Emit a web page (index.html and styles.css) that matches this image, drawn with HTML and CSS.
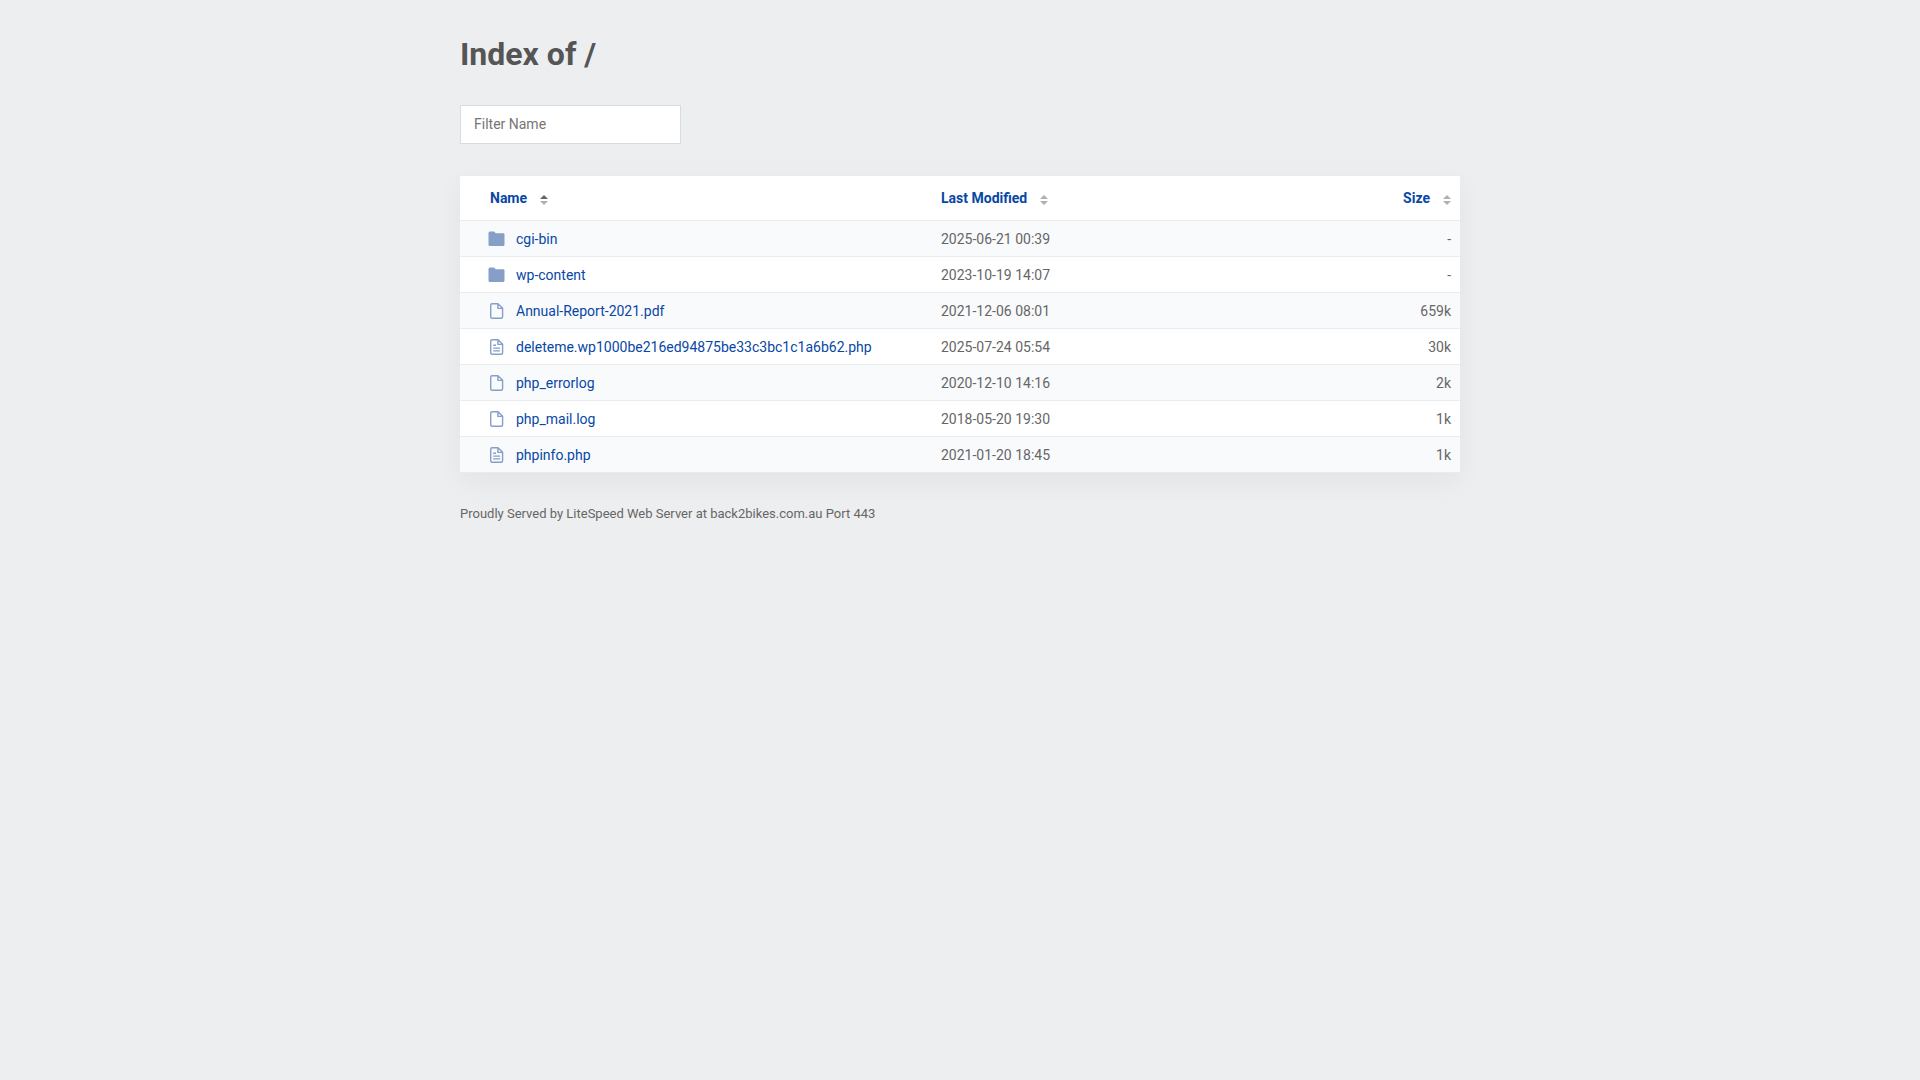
FILE: index.html
```html
<!DOCTYPE html>
<html lang="en">
<head>
  <meta charset="UTF-8" />
  <meta name="viewport" content="width=device-width, initial-scale=1.0"/>
  <title>Index of /</title>
  <link rel="stylesheet" href="styles.css">
</head>
<body>
  <svg class="icon-defs" aria-hidden="true">
    <symbol id="icon-folder" viewBox="0 0 18 18">
      <path d="M2 1.500h3.700q.6 0 1 .5l.5.700q.4.600 1 .600h7q1.300 0 1.300 1.300v9.900q0 1.500-1.500 1.500h-13q-1.500 0-1.500-1.500v-11.500q0-1.500 1.500-1.500z" fill="currentColor"/>
    </symbol>
    <symbol id="icon-file" viewBox="0 0 18 18">
      <path d="M10 1.700h-5.800q-1.500 0-1.500 1.500v11.600q0 1.500 1.500 1.500h8.900q1.500 0 1.500-1.500v-8.500zM9.900 1.700v4.700h4.700" fill="none" stroke="currentColor" stroke-width="1.400" stroke-linejoin="round"/>
    </symbol>
    <symbol id="icon-text" viewBox="0 0 18 18">
      <path d="M10 1.700h-5.800q-1.500 0-1.500 1.500v11.600q0 1.500 1.500 1.500h8.900q1.500 0 1.500-1.500v-8.500zM9.900 1.700v4.700h4.700M5.200 7.200h2.800M5.200 10.100h6.900M5.200 12.900h6.900" fill="none" stroke="currentColor" stroke-width="1.400" stroke-linejoin="round"/>
    </symbol>
    <symbol id="icon-sort" viewBox="0 0 8 10">
      <path class="sort-up" d="M0 4l4-4 4 4z"/>
      <path class="sort-down" d="M0 6h8l-4 4z"/>
    </symbol>
  </svg>

  <div class="content">
    <h1>Index of /</h1>

    <div class="search">
      <input type="text" id="filter" class="filter" placeholder="Filter Name" aria-label="Filter Name"/>
    </div>

    <table class="listing" id="listing">
      <thead>
        <tr>
          <th class="name"><button class="sort asc">Name <svg><use href="#icon-sort"/></svg></button></th>
          <th class="date"><button class="sort">Last Modified <svg><use href="#icon-sort"/></svg></button></th>
          <th class="size"><button class="sort">Size <svg><use href="#icon-sort"/></svg></button></th>
        </tr>
      </thead>
      <tbody>
        <tr>
          <td class="name"><a href="cgi-bin/"><svg class="icon"><use href="#icon-folder"/></svg>cgi-bin</a></td>
          <td class="date">2025-06-21 00:39</td>
          <td class="size">-</td>
        </tr>
        <tr>
          <td class="name"><a href="wp-content/"><svg class="icon"><use href="#icon-folder"/></svg>wp-content</a></td>
          <td class="date">2023-10-19 14:07</td>
          <td class="size">-</td>
        </tr>
        <tr>
          <td class="name"><a href="Annual-Report-2021.pdf"><svg class="icon"><use href="#icon-file"/></svg>Annual-Report-2021.pdf</a></td>
          <td class="date">2021-12-06 08:01</td>
          <td class="size">659k</td>
        </tr>
        <tr>
          <td class="name"><a href="deleteme.wp1000be216ed94875be33c3bc1c1a6b62.php"><svg class="icon"><use href="#icon-text"/></svg>deleteme.wp1000be216ed94875be33c3bc1c1a6b62.php</a></td>
          <td class="date">2025-07-24 05:54</td>
          <td class="size">30k</td>
        </tr>
        <tr>
          <td class="name"><a href="php_errorlog"><svg class="icon"><use href="#icon-file"/></svg>php_errorlog</a></td>
          <td class="date">2020-12-10 14:16</td>
          <td class="size">2k</td>
        </tr>
        <tr>
          <td class="name"><a href="php_mail.log"><svg class="icon"><use href="#icon-file"/></svg>php_mail.log</a></td>
          <td class="date">2018-05-20 19:30</td>
          <td class="size">1k</td>
        </tr>
        <tr>
          <td class="name"><a href="phpinfo.php"><svg class="icon"><use href="#icon-text"/></svg>phpinfo.php</a></td>
          <td class="date">2021-01-20 18:45</td>
          <td class="size">1k</td>
        </tr>
      </tbody>
    </table>

    <div class="footer">Proudly Served by LiteSpeed Web Server at back2bikes.com.au Port 443</div>
  </div>

  <script>
    // hide rows whose name does not contain the typed text
    document.getElementById("filter").addEventListener("input", function () {
      const text = this.value.toLowerCase();
      document.querySelectorAll("#listing tbody tr").forEach((row) => {
        row.hidden = !row.cells[0].textContent.toLowerCase().includes(text);
      });
    });
  </script>
</body>
</html>
```
FILE: styles.css
```css
* {
  box-sizing: border-box;
}

body {
  margin: 0;
  padding: 0 20px;
  background-color: #edeef0;
  color: #666;
  font-family: Roboto, Arial, sans-serif;
  font-size: 14px;
  line-height: 20px;
}

.icon-defs {
  display: none;
}

.content {
  max-width: 1000px;
  margin: 0 auto;
}

h1 {
  margin: 0;
  padding: 34px 0 31px;
  color: #555;
  font-size: 32px;
  line-height: 40px;
}

.filter {
  display: block;
  width: 221px;
  height: 39px;
  padding: 0 13px 2px;
  border: 1px solid #d8dcdf;
  background-color: white;
  color: #666;
  font: inherit;
}

.filter::placeholder {
  color: #757575;
}

.listing {
  width: 100%;
  margin-top: 32px;
  table-layout: fixed;
  border-collapse: separate;
  border-spacing: 0;
  background-color: white;
  box-shadow: 0 8px 24px rgba(0, 30, 30, 0.05);
}

.listing th,
.listing td {
  padding: 0 9px;
  border-bottom: 1px solid #e9ebed;
  text-align: left;
}

.listing th {
  height: 45px;
}

.listing td {
  height: 36px;
}

.listing th.name {
  width: 47%;
  padding-left: 30px;
}

.listing td.name {
  padding-left: 28px;
}

.listing .date {
  padding-left: 11px;
}

.listing .size {
  text-align: right;
}

.listing th.size {
  width: 20%;
}

tbody tr:nth-child(odd) {
  background-color: #f9fafc;
}

.sort {
  display: inline-flex;
  align-items: center;
  gap: 13px;
  padding: 0;
  border: none;
  background: none;
  color: #0747a6;
  font: inherit;
  font-weight: bold;
  cursor: pointer;
}

.sort svg {
  width: 8px;
  height: 10px;
  margin-top: 3px;
  fill: #b0b0b0;
}

.sort.asc svg {
  --up: #666;
}

.sort-up {
  fill: var(--up, #b0b0b0);
}

.listing a {
  display: flex;
  align-items: center;
  gap: 10px;
  color: #0747a6;
  text-decoration: none;
}

.icon {
  width: 18px;
  height: 18px;
  color: #859fc7;
}

.footer {
  padding: 31px 0;
  font-size: 13px;
}
```
